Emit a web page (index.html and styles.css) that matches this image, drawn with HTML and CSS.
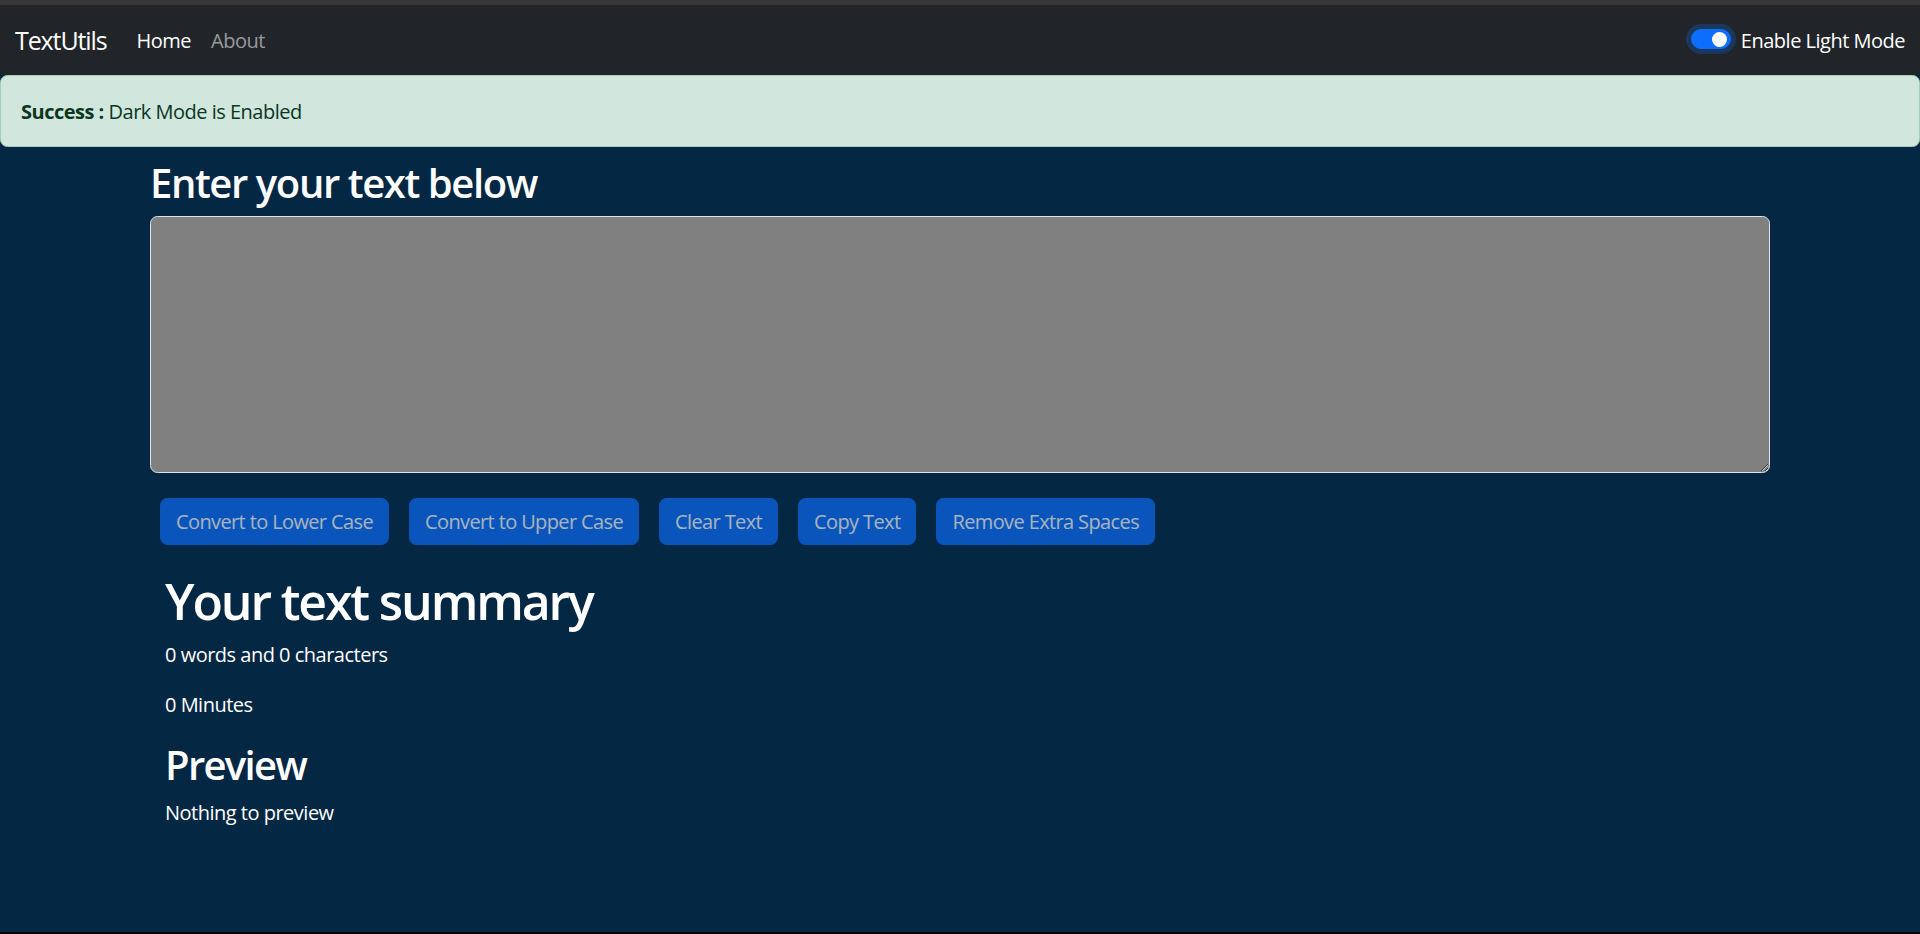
FILE: index.html
```html
<!DOCTYPE html>
<html lang="en">
<head>
<meta charset="utf-8">
<title>TextUtils</title>
<link rel="stylesheet" href="styles.css">
</head>
<body>
<div class="chrome-top"></div>
<nav class="navbar">
  <div class="navbar-inner">
    <div class="nav-left">
      <a class="brand" href="#">TextUtils</a>
      <ul class="nav-links">
        <li><a class="nav-link active" href="#">Home</a></li>
        <li><a class="nav-link" href="#">About</a></li>
      </ul>
    </div>
    <div class="switch">
      <input class="switch-input" type="checkbox" id="modeSwitch" checked>
      <label class="switch-label" for="modeSwitch">Enable Light Mode</label>
    </div>
  </div>
</nav>
<div class="alert-slot">
  <div class="alert"><strong>Success :</strong> Dark Mode is Enabled</div>
</div>
<main class="container main">
  <section class="form-area">
    <h2 class="title">Enter your text below</h2>
    <div class="textarea-wrap">
      <textarea class="text-input" id="myBox" rows="8"></textarea>
    </div>
    <div class="btn-row"><button class="btn" disabled>Convert to Lower Case</button><button class="btn" disabled>Convert to Upper Case</button><button class="btn" disabled>Clear Text</button><button class="btn" disabled>Copy Text</button><button class="btn" disabled>Remove Extra Spaces</button></div>
  </section>
  <section class="container summary">
    <h1 class="summary-title">Your text summary</h1>
    <p class="para">0 words and 0 characters</p>
    <p class="para">0 Minutes</p>
    <h2 class="preview-title">Preview</h2>
    <p class="para">Nothing to preview</p>
  </section>
</main>
<div class="chrome-bottom"></div>
</body>
</html>
```
FILE: styles.css
```css
* { box-sizing: border-box; }
html, body { margin: 0; padding: 0; }
body {
  background: #042743;
  color: #ffffff;
  font-family: "Open Sans", "Noto Sans", sans-serif;
  font-size: 20px;
  line-height: 1.5;
  letter-spacing: -0.5px;
  min-height: 934px;
}
.chrome-top { height: 5px; background: #383838; }
.chrome-bottom {
  position: fixed; left: 0; right: 0; bottom: 0;
  height: 2px; background: #000;
}
.navbar { background: #212529; padding: 10px 0; }
.navbar-inner {
  display: flex; align-items: center; justify-content: space-between;
  padding: 0 15px;
}
.nav-left { display: flex; align-items: center; }
.brand {
  color: #fff; text-decoration: none; font-size: 25px; line-height: 1.5;
  letter-spacing: -1.1px;
  padding: 7.25px 0 5.25px; margin-right: 20px;
}
.nav-links { display: flex; list-style: none; margin: 0; padding: 0; }
.nav-link {
  display: block; padding: 11px 10px 9px; color: rgba(255,255,255,.55);
  text-decoration: none; font-size: 20px; line-height: 1.5;
}
.nav-link.active { color: #fff; }
.switch { display: flex; align-items: center; }
.switch-input {
  appearance: none; -webkit-appearance: none; margin: 0 10px 2px 0;
  width: 40px; height: 20px; border-radius: 20px;
  background-color: #0d6efd; border: 1px solid #0d6efd;
  box-shadow: 0 0 0 5px rgba(13,110,253,.25);
  position: relative;
}
.switch-input::after {
  content: ""; position: absolute; right: 2.5px; top: 1.5px;
  width: 15px; height: 15px; border-radius: 50%; background: #fff;
}
.switch-label { color: #fff; font-size: 20px; line-height: 1.5; padding-top: 1px; }
.alert-slot { height: 62.5px; }
.alert {
  background: #d1e7dd; border: 1px solid #a3cfbb; color: #0a3622;
  border-radius: 7.5px; padding: 20.5px 20px 19.5px; font-size: 20px; line-height: 1.5;
}
.alert strong { font-weight: 700; }
.container { width: 100%; max-width: 1650px; margin: 0 auto; padding: 0 15px; }
.main { margin-top: 20px; margin-bottom: 20px; }
.title {
  font-size: 40px; font-weight: 600; line-height: 1.2; letter-spacing: -1.4px;
  margin: 0 0 10px; padding-top: 1px; height: 48px;
}
.textarea-wrap { margin-bottom: 20px; }
.text-input {
  display: block; width: 100%; height: 257px;
  padding: 7.5px 15px; font: inherit; color: #fff;
  background: #808080; border: 1px solid #dee2e6; border-radius: 7.5px;
}
.btn-row { display: flex; flex-wrap: wrap; }
.btn {
  margin: 5px 10px; padding: 8px 15px 7px; font: inherit; font-size: 20px; line-height: 1.5;
  letter-spacing: -0.62px;
  color: #fff; background: #0d6efd; border: 1px solid #0d6efd; border-radius: 7.5px;
  opacity: .65;
}
.summary { margin-top: 20px; margin-bottom: 20px; }
.summary-title {
  font-size: 50px; font-weight: 600; line-height: 1.2; letter-spacing: -2.15px;
  margin: 0 0 10px; padding-top: 1.5px; height: 60px;
}
.preview-title {
  font-size: 40px; font-weight: 600; line-height: 1.2; letter-spacing: -1.7px;
  margin: 0 0 10px; padding-top: 1.5px; height: 48px;
}
.para { margin: 0 0 20px; padding-top: 0.5px; height: 30px; }
```
